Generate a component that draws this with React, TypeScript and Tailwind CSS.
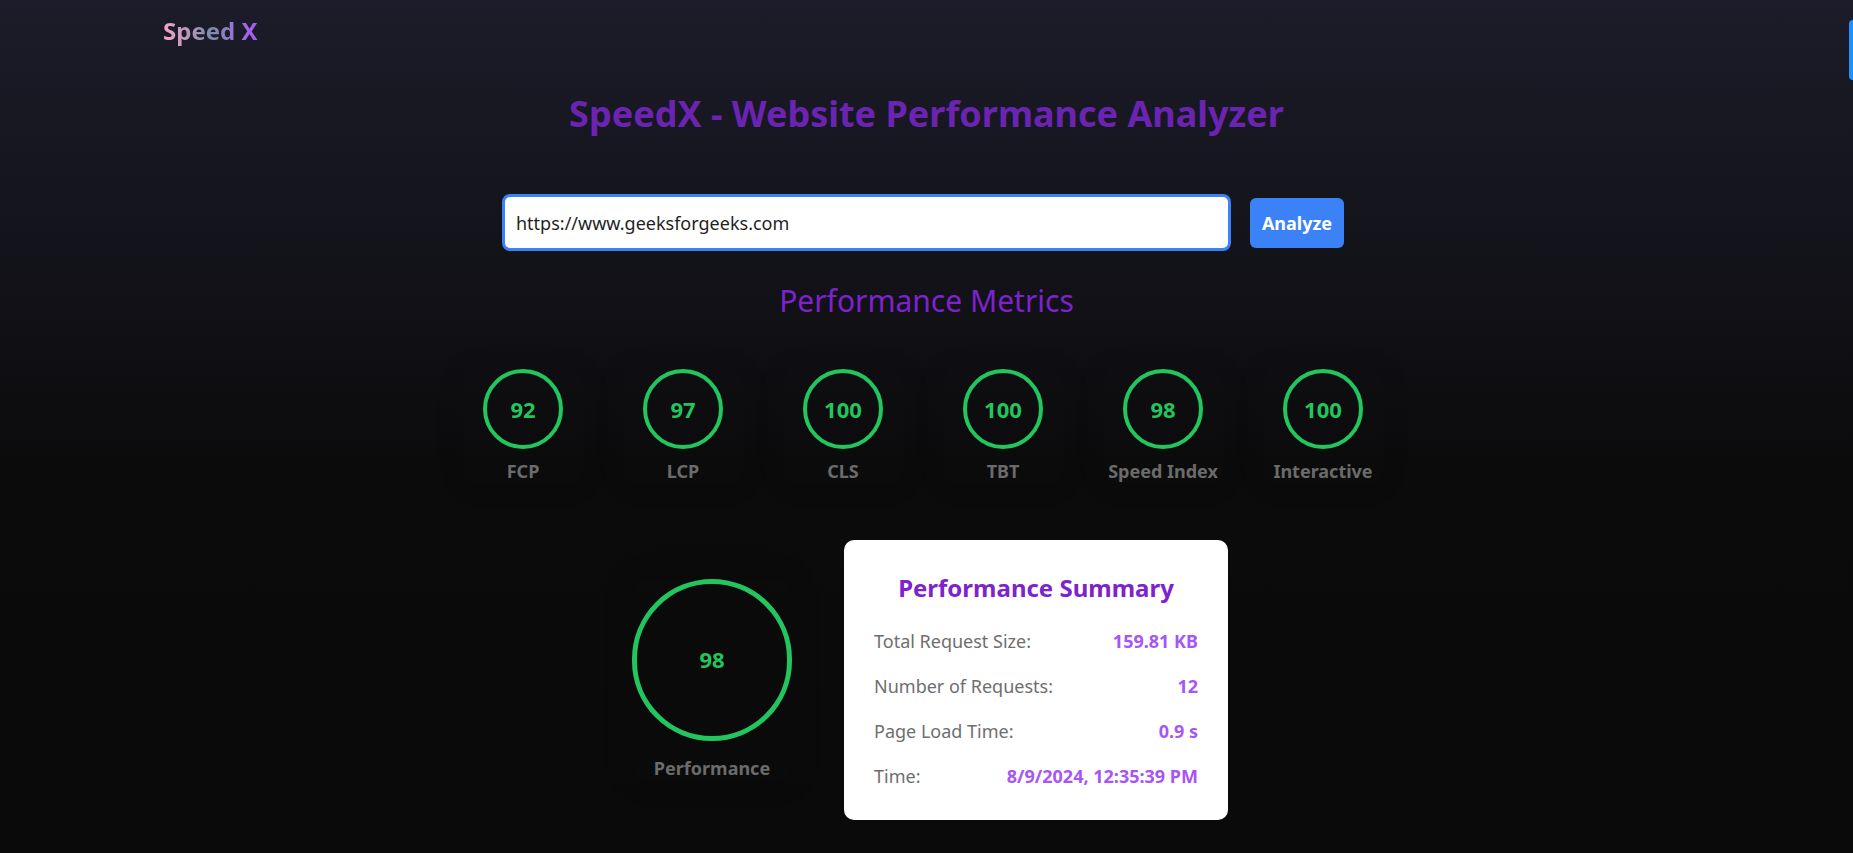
import { useState } from 'react';

const metrics = [
  { label: 'FCP', score: 92 },
  { label: 'LCP', score: 97 },
  { label: 'CLS', score: 100 },
  { label: 'TBT', score: 100 },
  { label: 'Speed Index', score: 98 },
  { label: 'Interactive', score: 100 },
];

const summary = [
  { label: 'Total Request Size:', value: '159.81 KB' },
  { label: 'Number of Requests:', value: '12' },
  { label: 'Page Load Time:', value: '0.9 s' },
  { label: 'Time:', value: '8/9/2024, 12:35:39 PM' },
];

export default function App() {
  const [url, setUrl] = useState('https://www.geeksforgeeks.com');

  return (
    <div className="relative min-h-screen w-full overflow-hidden bg-[linear-gradient(180deg,#1c1c2a_0%,#0b0b0c_55%,#0a0a0a_100%)] font-['Noto_Sans','Open_Sans',sans-serif]">
      {/* side tab peeking in from the right */}
      <div className="absolute right-0 top-[20px] h-[60px] w-[4px] rounded-l-[6px] bg-[#1e90ff]" />

      <header className="pl-[163px] pt-[15px]">
        <span className="bg-linear-to-r from-[#f7a3cc] via-[#7d8bab] to-[#a855f7] bg-clip-text text-2xl font-bold text-transparent">
          Speed X
        </span>
      </header>

      <main className="flex flex-col items-center">
        <h1 className="mt-[47px] text-4xl font-bold text-[#6b24b2]">
          SpeedX - Website Performance Analyzer
        </h1>

        <div className="mr-[7px] mt-[60px] flex items-center gap-[19px]">
          <input
            value={url}
            onChange={(e) => setUrl(e.target.value)}
            className="h-[57px] w-[729px] rounded-lg border-[3px] border-[#3b82f6] bg-white pl-[11px] text-lg text-[#1f1f1f] outline-none"
          />
          <button className="h-[50px] w-[94px] rounded-md bg-[#3b82f6] text-lg font-bold text-white">
            Analyze
          </button>
        </div>

        <h2 className="mt-[32px] text-3xl text-[#7e22ce]">Performance Metrics</h2>

        <div className="mr-[7px] mt-[50px] flex gap-[40px]">
          {metrics.map((m) => (
            <div key={m.label} className="flex w-[120px] flex-col items-center rounded-2xl shadow-[0_0_28px_rgba(0,0,0,0.12)]">
              <div className="flex h-[80px] w-[80px] items-center justify-center rounded-full border-4 border-[#22c55e] text-[22px] font-bold text-[#22c55e]">
                {m.score}
              </div>
              <span className="mt-2 text-lg font-bold text-[#6b6b6b]">{m.label}</span>
            </div>
          ))}
        </div>

        <div className="mt-[55px] flex items-center gap-[52px] pl-[7px]">
          <div className="flex flex-col items-center rounded-2xl shadow-[0_0_32px_rgba(0,0,0,0.12)]">
            <div className="flex h-[162px] w-[160px] items-center justify-center rounded-full border-[5px] border-[#22c55e] text-[22px] font-bold text-[#22c55e]">
              98
            </div>
            <span className="mt-[13px] text-lg font-bold text-[#6b6b6b]">Performance</span>
          </div>

          <div className="w-[384px] rounded-[10px] bg-white px-[30px] pb-[30px] pt-[32px]">
            <h3 className="mb-[24px] text-center text-2xl font-bold text-[#7e22ce]">
              Performance Summary
            </h3>
            <div className="flex flex-col gap-[18px]">
              {summary.map((row) => (
                <div key={row.label} className="flex justify-between text-lg leading-[27px]">
                  <span className="text-[#6e6e6e]">{row.label}</span>
                  <span className="font-bold text-[#a855f7]">{row.value}</span>
                </div>
              ))}
            </div>
          </div>
        </div>
      </main>
    </div>
  );
}
